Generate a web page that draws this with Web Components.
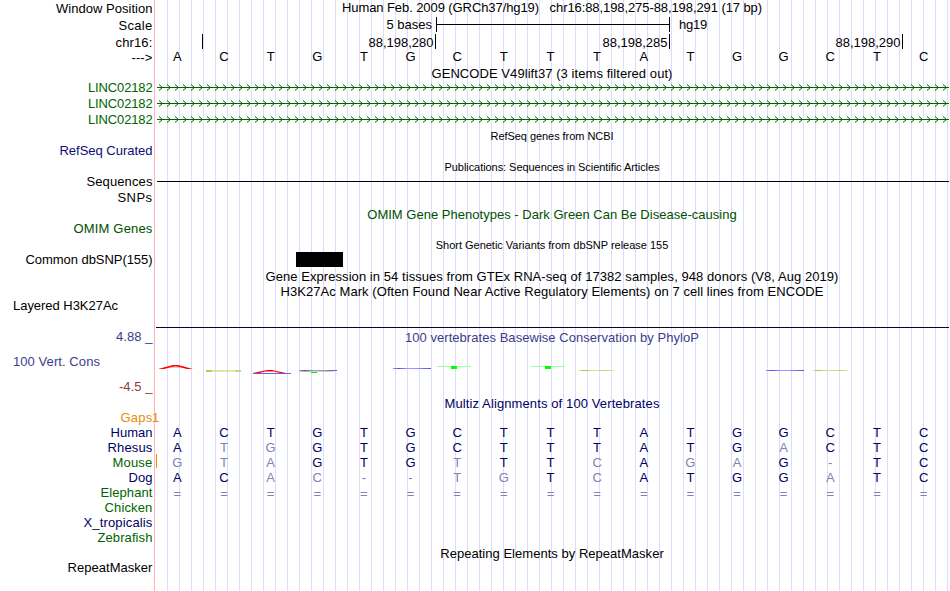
<!DOCTYPE html>
<html lang="en">
<head>
<meta charset="utf-8">
<title>Genome Browser</title>
<style>
  body {
    margin: 0;
    overflow: hidden;
    background: white;
    font: 13px/15px "Liberation Sans", Arial, sans-serif;
  }
</style>
</head>
<body>
<genome-browser></genome-browser>

<script>
const REFERENCE = 'ACTGTGCTTTATGGCTC';
const GREEN = '#006400';
const NAVY = '#000064';

// Text whose letter spacing is adjusted so that it fills a given width.
class FitText extends HTMLElement {
  constructor() {
    super();
    this.attachShadow({mode: 'open'});
    // The host keeps white space, so there must be none around the span.
    this.shadowRoot.innerHTML =
      '<style>:host {display: inline-block; vertical-align: top; white-space: pre;}</style>' +
      '<span><slot></slot></span>';
  }

  connectedCallback() {
    const width = Number(this.getAttribute('width'));
    if (!width) return;
    const span = this.shadowRoot.querySelector('span');
    const natural = span.getBoundingClientRect().width;
    const spacing = (width - natural) / this.textContent.length;
    span.style.letterSpacing = spacing + 'px';
  }
}

// One row: a label at the left and the data area at the right.
class TrackRow extends HTMLElement {
  constructor() {
    super();
    this.attachShadow({mode: 'open'});
    this.shadowRoot.innerHTML = /*html*/ `
      <style>
        :host {
          display: grid;
          grid-template-columns: 152.5px 796px;
          column-gap: 1.5px;
          height: var(--height, 15px);
        }

        .label {
          padding-top: var(--label-drop, 0);
          text-align: right;
          white-space: nowrap;
        }

        .data {
          position: relative;
          min-width: 0;
        }
      </style>
      <div class="label"><slot name="label"></slot></div>
      <div class="data"><slot></slot></div>
    `;
  }
}

class TrackTitle extends HTMLElement {
  constructor() {
    super();
    this.attachShadow({mode: 'open'});
    this.shadowRoot.innerHTML = /*html*/ `
      <style>
        :host {
          display: block;
          text-align: center;
          white-space: nowrap;
        }

        :host([small]) {
          padding-top: 1px;
          font-size: 11px;
        }
      </style>
      <slot></slot>
    `;
  }
}

class BaseSequence extends HTMLElement {
  constructor() {
    super();
    this.attachShadow({mode: 'open'});
  }

  connectedCallback() {
    const bases = this.getAttribute('bases');
    const cells = Array.from(bases, (base, i) => {
      const kind = base === '=' ? 'other double' : base === REFERENCE[i] ? '' : 'other';
      return `<span class="${kind}">${base}</span>`;
    });
    this.shadowRoot.innerHTML = /*html*/ `
      <style>
        :host {
          display: grid;
          grid-template-columns: repeat(17, 46.65px);
          text-align: center;
        }

        .other {
          color: #8282b4;
        }

        .double {
          padding-top: 1px;
        }
      </style>
      ${cells.join('')}
    `;
  }
}

// Intron line with strand arrows pointing right.
class GeneLine extends HTMLElement {
  constructor() {
    super();
    this.attachShadow({mode: 'open'});
    let path = '';
    for (let x = 5; x < 795; x += 8) {
      path += `M${x} 4.5L${x + 3.5} 7.5L${x} 10.5`;
    }
    this.shadowRoot.innerHTML = /*html*/ `
      <style>
        :host, svg {
          display: block;
        }
      </style>
      <svg width="795" height="16" fill="none" stroke="${GREEN}">
        <path d="M3 7.5H795" />
        <path d="${path}" />
      </svg>
    `;
  }
}

class ScaleBar extends HTMLElement {
  constructor() {
    super();
    this.attachShadow({mode: 'open'});
    this.shadowRoot.innerHTML = /*html*/ `
      <style>
        :host {
          display: grid;
          grid-template-columns: 278px 234px auto;
          column-gap: 4px;
        }

        .name {
          text-align: right;
        }

        .bar {
          height: 15px;
          box-sizing: border-box;
          border: solid black;
          border-width: 0 1px;
          background: linear-gradient(black, black) 0 7px / 100% 1px no-repeat;
        }

        .assembly {
          padding-left: 5px;
        }
      </style>
      <div class="name"><fit-text width="45.5">5 bases</fit-text></div>
      <div class="bar"></div>
      <div class="assembly"><fit-text width="28">hg19</fit-text></div>
    `;
  }
}

class PositionTicks extends HTMLElement {
  constructor() {
    super();
    this.attachShadow({mode: 'open'});
    this.shadowRoot.innerHTML = /*html*/ `
      <style>
        :host {
          display: grid;
          grid-template-columns: 49px 233px 234px 233px;
        }

        div {
          height: 15px;
          box-sizing: border-box;
          padding: 1px 1.5px 0 0;
          border-right: 1px solid black;
          text-align: right;
        }
      </style>
      <div></div>
      <div><fit-text width="65">88,198,280</fit-text></div>
      <div><fit-text width="65">88,198,285</fit-text></div>
      <div><fit-text width="65">88,198,290</fit-text></div>
    `;
  }
}

// Squashed base letters of the conservation track.
class ConservationPlot extends HTMLElement {
  constructor() {
    super();
    this.attachShadow({mode: 'open'});
    this.shadowRoot.innerHTML = /*html*/ `
      <style>
        :host {
          position: absolute;
          inset: 0;
        }

        svg {
          display: block;
        }
      </style>
      <svg width="796" height="68" viewBox="154 328 796 68">
        <defs>
          <linearGradient id="blue">
            <stop offset="0" stop-color="#9696ff" />
            <stop offset="0.15" stop-color="#5050f0" />
            <stop offset="0.4" stop-color="#a0a0ff" />
            <stop offset="0.65" stop-color="#9090fa" />
            <stop offset="1" stop-color="#5050f0" />
          </linearGradient>
          <linearGradient id="olive">
            <stop offset="0" stop-color="#dcdc96" />
            <stop offset="0.15" stop-color="#b9b946" />
            <stop offset="0.4" stop-color="#dcdca0" />
            <stop offset="0.8" stop-color="#cdcd78" />
            <stop offset="1" stop-color="#e6e6b4" />
          </linearGradient>
        </defs>
        <path d="M158 369L173 365H178L193 369H187L180 367.2H171L164 369Z" fill="red" />
        <path d="M170 367.2L175.5 366.2L181 367.2Z" fill="#ffc8c8" />
        <rect x="206" y="370.4" width="35" height="1.2" fill="#d2d282" />
        <rect x="206" y="370" width="6" height="2" fill="#c3c364" />
        <rect x="235" y="370.4" width="6" height="1.2" fill="#c3c364" />
        <rect x="253" y="373" width="38" height="1" fill="#6464ff" />
        <path d="M252 373.2L267 370H272L287 373.2H281L274 371.6H265L259 373.2Z" fill="red" />
        <rect x="299" y="370" width="38" height="1" fill="url(#blue)" />
        <rect x="299" y="371" width="35" height="1" fill="url(#olive)" />
        <rect x="311" y="372" width="6" height="1" fill="#00f000" />
        <rect x="393" y="368" width="38" height="1" fill="url(#blue)" />
        <rect x="437" y="366" width="34" height="1" fill="#a0ffa0" />
        <rect x="451" y="366" width="6" height="3" fill="lime" />
        <rect x="531" y="366" width="34" height="1" fill="#a0ffa0" />
        <rect x="545" y="366" width="6" height="3" fill="lime" />
        <rect x="579" y="370" width="35" height="1" fill="url(#olive)" />
        <rect x="766" y="370" width="38" height="1" fill="url(#blue)" />
        <rect x="813" y="370" width="35" height="1" fill="url(#olive)" />
      </svg>
    `;
  }
}

class ConservationLabels extends HTMLElement {
  constructor() {
    super();
    this.attachShadow({mode: 'open'});
    this.shadowRoot.innerHTML = /*html*/ `
      <style>
        :host {
          display: grid;
          grid-template-rows: repeat(3, 15px);
          row-gap: 10px;
          padding-top: 1px;
          color: #3c3c8c;
        }

        .name {
          padding-left: 13px;
          text-align: left;
        }

        .low {
          color: #8c3c3c;
        }
      </style>
      <div><fit-text width="36.5">4.88 _</fit-text></div>
      <div class="name"><fit-text width="87">100 Vert. Cons</fit-text></div>
      <div class="low"><fit-text width="33.5">-4.5 _</fit-text></div>
    `;
  }
}

// A solid bar placed at a position of the data area.
class FeatureBar extends HTMLElement {
  constructor() {
    super();
    this.attachShadow({mode: 'open'});
    this.shadowRoot.innerHTML = /*html*/ `
      <style>
        :host {
          display: block;
          width: var(--width);
          height: var(--size, 1px);
          margin: var(--top, 0) 1px 0 var(--start, 2px);
          background: var(--color, black);
        }
      </style>
    `;
  }
}

class GenomeBrowser extends HTMLElement {
  constructor() {
    super();
    this.attachShadow({mode: 'open'});

    const label = (text, width, color = 'black') =>
      `<fit-text slot="label" width="${width}" style="color: ${color}">${text}</fit-text>`;
    const title = (text, width, height, color = 'black', small = '') => /*html*/ `
      <track-row style="--height: ${height}px">
        <track-title ${small} style="color: ${color}"><fit-text width="${width}">${text}</fit-text></track-title>
      </track-row>`;
    const species = (name, width, bases, color) => /*html*/ `
      <track-row>
        ${label(name, width, color)}
        ${bases ? `<base-sequence bases="${bases}" style="color: ${NAVY}"></base-sequence>` : ''}
      </track-row>`;
    const gene = /*html*/ `
      <track-row style="--height: 16px">
        ${label('LINC02182', 64.5, GREEN)}
        <gene-line></gene-line>
      </track-row>`;

    this.shadowRoot.innerHTML = /*html*/ `
      <style>
        :host {
          display: block;
          width: 950px;
          height: 591px;
          overflow: hidden;
          background:
            linear-gradient(#ffb4b4, #ffb4b4) 154px 0 / 1px 100% no-repeat,
            repeating-linear-gradient(to right, #dcdcff 0 1px, transparent 1px 12px) 167px 0 no-repeat;
        }

        .left {
          float: left;
          margin-left: 13px;
        }

        .gap-count {
          position: absolute;
          left: -2px;
          top: 0;
          color: #e68c0a;
        }
      </style>

      <track-row style="--height: 17px; --label-drop: 1px">
        ${label('Window Position', 96.5)}
        <track-title><fit-text width="420">Human Feb. 2009 (GRCh37/hg19)   chr16:88,198,275-88,198,291 (17 bp)</fit-text></track-title>
      </track-row>
      <track-row style="--height: 17px; --label-drop: 1px">
        ${label('Scale', 34)}
        <scale-bar></scale-bar>
      </track-row>
      <track-row style="--label-drop: 1px">
        ${label('chr16:', 37)}
        <position-ticks></position-ticks>
      </track-row>
      <track-row style="--height: 17px; --label-drop: 1px">
        ${label('---&gt;', 21)}
        <base-sequence bases="${REFERENCE}"></base-sequence>
      </track-row>

      ${title('GENCODE V49lift37 (3 items filtered out)', 241, 14)}
      ${gene.repeat(3)}
      ${title('RefSeq genes from NCBI', 123, 15, 'black', 'small')}
      <track-row style="--height: 16px">
        ${label('RefSeq Curated', 93, '#0c0c78')}
      </track-row>
      ${title('Publications: Sequences in Scientific Articles', 215, 15, 'black', 'small')}
      <track-row style="--height: 16px">
        ${label('Sequences', 66)}
        <feature-bar style="--top: 7px; --start: 3px"></feature-bar>
      </track-row>
      <track-row style="--height: 17px">
        ${label('SNPs', 35)}
      </track-row>
      ${title('OMIM Gene Phenotypes - Dark Green Can Be Disease-causing', 369.5, 14, '#005000')}
      <track-row style="--height: 16px">
        ${label('OMIM Genes', 79, '#005000')}
      </track-row>
      ${title('Short Genetic Variants from dbSNP release 155', 232.5, 15, 'black', 'small')}
      <track-row style="--height: 17px">
        ${label('Common dbSNP(155)', 127)}
        <feature-bar style="--start: 142px; --width: 47px; --size: 15px"></feature-bar>
      </track-row>
      ${title('Gene Expression in 54 tissues from GTEx RNA-seq of 17382 samples, 948 donors (V8, Aug 2019)', 573, 15)}
      ${title('H3K27Ac Mark (Often Found Near Active Regulatory Elements) on 7 cell lines from ENCODE', 543, 14)}
      <track-row style="--height: 30px">
        <fit-text slot="label" class="left" width="105">Layered H3K27Ac</fit-text>
        <feature-bar style="--top: 29px; --color: #140028"></feature-bar>
      </track-row>

      <track-row style="--height: 68px">
        <conservation-labels slot="label"></conservation-labels>
        <track-title style="padding-top: 2px; color: #3c3c8c"><fit-text width="294">100 vertebrates Basewise Conservation by PhyloP</fit-text></track-title>
        <conservation-plot></conservation-plot>
      </track-row>

      ${title('Multiz Alignments of 100 Vertebrates', 215, 14, NAVY)}
      <track-row>
        ${label('Gaps', 32, '#e68c0a')}
        <span class="gap-count">1</span>
      </track-row>
      ${species('Human', 42, REFERENCE, NAVY)}
      ${species('Rhesus', 45, 'ATGGTGCTTTATGACTC', NAVY)}
      <track-row>
        ${label('Mouse', 40, GREEN)}
        <feature-bar style="--width: 1px; --size: 14px; --color: #e68c0a; --top: -1px"></feature-bar>
        <base-sequence bases="GTAGTGTTTCAGAG-TC" style="color: ${NAVY}; margin-top: -13px"></base-sequence>
      </track-row>
      ${species('Dog', 24, 'ACAC--TGTCATGGATC', NAVY)}
      ${species('Elephant', 52, '='.repeat(17), GREEN)}
      ${species('Chicken', 48, '', GREEN)}
      ${species('X_tropicalis', 69, '', NAVY)}
      ${species('Zebrafish', 55, '', GREEN)}

      <track-row>
        <track-title style="padding-top: 1px"><fit-text width="223.5">Repeating Elements by RepeatMasker</fit-text></track-title>
      </track-row>
      <track-row>
        ${label('RepeatMasker', 85)}
      </track-row>
    `;
  }
}

customElements.define('fit-text', FitText);
customElements.define('track-row', TrackRow);
customElements.define('track-title', TrackTitle);
customElements.define('base-sequence', BaseSequence);
customElements.define('gene-line', GeneLine);
customElements.define('scale-bar', ScaleBar);
customElements.define('position-ticks', PositionTicks);
customElements.define('conservation-plot', ConservationPlot);
customElements.define('conservation-labels', ConservationLabels);
customElements.define('feature-bar', FeatureBar);
customElements.define('genome-browser', GenomeBrowser);
</script>
</body>
</html>
